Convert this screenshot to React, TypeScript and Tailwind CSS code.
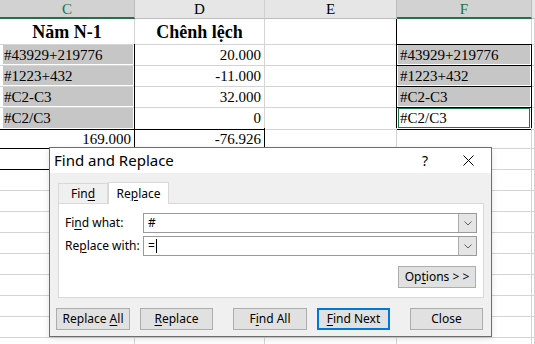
import React from 'react';

const serif = { fontFamily: '"Liberation Serif", "Times New Roman", serif' };
const ui = { fontFamily: '"Noto Sans", "Segoe UI", sans-serif' };

const grid = 'grid grid-cols-[135px_130px_132px_135px_3px]';
const line = 'border-r border-b border-[#d4d4d4]';

const rowsC = ['#43929+219776', '#1223+432', '#C2-C3', '#C2/C3'];
const rowsD = ['20.000', '-11.000', '32.000', '0'];

const U: React.FC<{ children: React.ReactNode }> = ({ children }) => (
  <span className="underline underline-offset-[2px] decoration-[1px]">{children}</span>
);

const Combo: React.FC<{ value: string; caret?: boolean }> = ({ value, caret }) => (
  <div className="flex-1 h-[20px] flex bg-white border border-[#9a9a9a]">
    <div className="flex-1 flex items-center pl-[4px] text-[12px] text-black">
      <span>{value}</span>
      {caret && <span className="w-[1px] h-[14px] bg-black ml-[1px]" />}
    </div>
    <div className="w-[18px] bg-[#e5e5e5] border-l border-[#acacac] flex items-center justify-center">
      <svg width="8" height="5" viewBox="0 0 8 5" fill="none" stroke="#606060" strokeWidth="1">
        <path d="M0.5 0.5 L4 4 L7.5 0.5" />
      </svg>
    </div>
  </div>
);

const Btn: React.FC<{ children: React.ReactNode; className?: string; primary?: boolean }> = ({ children, className = '', primary }) => (
  <div
    className={`h-[22px] flex items-center justify-center bg-[#e1e1e1] text-[12px] text-black ${
      primary ? 'border-2 border-[#0078d7]' : 'border border-[#adadad]'
    } ${className}`}
  >
    <span>{children}</span>
  </div>
);

export default function App() {
  return (
    <div className="relative w-[535px] h-[344px] overflow-hidden bg-white text-black">
      <div style={serif}>
        {/* column headers */}
        <div className={`${grid} h-[19px] text-[15px] leading-none`}>
          <div className="bg-[#d2d2d2] text-[#217346] border-b-2 border-[#217346] border-r border-r-[#bdbdbd] flex items-center justify-center pt-[1px]">C</div>
          <div className="bg-[#e6e6e6] border-b border-[#bdbdbd] border-r border-r-[#d0d0d0] flex items-center justify-center">D</div>
          <div className="bg-[#e6e6e6] border-b border-[#bdbdbd] border-r border-r-[#bdbdbd] flex items-center justify-center">E</div>
          <div className="bg-[#d2d2d2] text-[#217346] border-b-2 border-[#217346] border-r border-r-[#bdbdbd] flex items-center justify-center pt-[1px]">F</div>
          <div className="bg-[#e6e6e6] border-b border-[#bdbdbd]" />
        </div>

        {/* row 1 */}
        <div className={`${grid} h-[25px] text-[18px] font-bold leading-[23px]`}>
          <div className={`${line} text-center pt-[2px]`}>Năm N-1</div>
          <div className={`${line} text-center pt-[2px]`}>Chênh lệch</div>
          <div className={`${line} border-r-black`} />
          <div className={`${line} border-b-black`} />
          <div className={line} />
        </div>

        {/* data rows */}
        {rowsC.map((c, i) => (
          <div key={c} className={`${grid} h-[21px] text-[15px] leading-[18px]`}>
            <div className={`${line} border-r-black ${i === 3 ? 'border-b-black' : ''} flex`}>
              <div className="flex-1 bg-[#c6c6c6] my-[1px] ml-[3px] mr-[1px] pl-[1px] pt-[1px]">{c}</div>
            </div>
            <div className={`${line} ${i === 3 ? 'border-b-black' : ''} text-right pr-[3px] pt-[2px]`}>{rowsD[i]}</div>
            <div className={`${line} border-r-black`} />
            <div className={`${line} border-r-black border-b-black flex`}>
              {i === 3 ? (
                <div className="flex-1 m-[1px] border border-[#217346] pl-[1px]">{c}</div>
              ) : (
                <div className="flex-1 m-[1px] bg-[#c6c6c6] pl-[2px] pt-[1px]">{c}</div>
              )}
            </div>
            <div className={line} />
          </div>
        ))}

        {/* totals row */}
        <div className={`${grid} h-[21px] text-[15px] leading-[18px]`}>
          <div className={`${line} border-r-black border-b-black text-right pr-[3px] pt-[2px]`}>169.000</div>
          <div className={`${line} border-r-black border-b-black text-right pr-[3px] pt-[2px]`}>-76.926</div>
          <div className={line} />
          <div className={line} />
          <div className={line} />
        </div>

        <div className={`${grid} h-[21px]`}>
          <div className={`${line} border-b-black`} />
          <div className={line} />
          <div className={line} />
          <div className={line} />
          <div className={line} />
        </div>

        {Array.from({ length: 9 }).map((_, r) => (
          <div key={r} className={`${grid} h-[21px]`}>
            {Array.from({ length: 5 }).map((__, k) => (
              <div key={k} className={line} />
            ))}
          </div>
        ))}
      </div>

      {/* Find and Replace dialog */}
      <div
        style={ui}
        className="absolute left-[49px] top-[147px] w-[443px] h-[190px] border border-[#6d6d6d] bg-[#f0f0f0] flex flex-col shadow-[0_2px_6px_rgba(0,0,0,0.12)]"
      >
        <div className="h-[25px] bg-white flex items-center text-black">
          <span className="pl-[4px] text-[15px] leading-none">Find and Replace</span>
          <div className="ml-auto flex h-full">
            <div className="w-[46px] flex items-center justify-center pl-[6px] text-[14px]">?</div>
            <div className="w-[46px] flex items-center justify-center">
              <svg width="11" height="11" viewBox="0 0 11 11" stroke="#000" strokeWidth="1">
                <path d="M0.5 0.5 L10.5 10.5 M10.5 0.5 L0.5 10.5" />
              </svg>
            </div>
          </div>
        </div>

        <div className="pl-[8px] pr-[7px] pt-[8px]">
          <div className="flex items-end h-[22px] text-[12px]">
            <div className="w-[50px] h-[20px] border border-b-0 border-[#d9d9d9] bg-[#f0f0f0] flex items-center justify-center">
              <span>Fin<U>d</U></span>
            </div>
            <div className="relative z-10 w-[61px] h-[22px] mb-[-1px] bg-white border border-b-0 border-[#d9d9d9] flex items-center justify-center">
              <span>Re<U>p</U>lace</span>
            </div>
          </div>
          <div className="h-[95px] bg-white border border-[#d9d9d9] pt-[9px] pl-[6px] pr-[6px] text-[12px]">
            <div className="flex items-center h-[20px]">
              <div className="w-[78px]">
                Fi<U>n</U>d what:
              </div>
              <Combo value="#" />
            </div>
            <div className="flex items-center h-[20px] mt-[3px]">
              <div className="w-[78px]">
                Re<U>p</U>lace with:
              </div>
              <Combo value="=" caret />
            </div>
            <div className="flex justify-end mt-[10px] pr-[1px]">
              <Btn className="w-[78px]">
                Op<U>t</U>ions &gt; &gt;
              </Btn>
            </div>
          </div>
        </div>

        <div className="flex pl-[6px] mt-[10px]">
          <Btn className="w-[74px]">
            Replace <U>A</U>ll
          </Btn>
          <Btn className="w-[73px] ml-[10px]">
            <U>R</U>eplace
          </Btn>
          <Btn className="w-[74px] ml-[20px]">
            F<U>i</U>nd All
          </Btn>
          <Btn className="w-[73px] ml-[10px]" primary>
            <U>F</U>ind Next
          </Btn>
          <Btn className="w-[73px] ml-[20px]">Close</Btn>
        </div>
      </div>
    </div>
  );
}
